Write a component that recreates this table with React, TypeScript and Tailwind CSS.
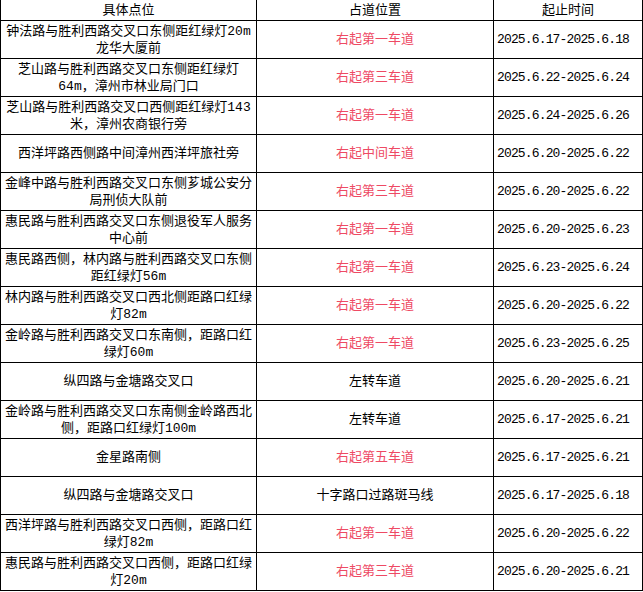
type Row = {
  place: string[];
  lane: string;
  red: boolean;
  time: string;
};

const rows: Row[] = [
  { place: ['钟法路与胜利西路交叉口东侧距红绿灯20m', '龙华大厦前'], lane: '右起第一车道', red: true, time: '2025.6.17-2025.6.18' },
  { place: ['芝山路与胜利西路交叉口东侧距红绿灯', '64m，漳州市林业局门口'], lane: '右起第三车道', red: true, time: '2025.6.22-2025.6.24' },
  { place: ['芝山路与胜利西路交叉口西侧距红绿灯143', '米，漳州农商银行旁'], lane: '右起第一车道', red: true, time: '2025.6.24-2025.6.26' },
  { place: ['西洋坪路西侧路中间漳州西洋坪旅社旁'], lane: '右起中间车道', red: true, time: '2025.6.20-2025.6.22' },
  { place: ['金峰中路与胜利西路交叉口东侧芗城公安分', '局刑侦大队前'], lane: '右起第三车道', red: true, time: '2025.6.20-2025.6.22' },
  { place: ['惠民路与胜利西路交叉口东侧退役军人服务', '中心前'], lane: '右起第一车道', red: true, time: '2025.6.20-2025.6.23' },
  { place: ['惠民路西侧，林内路与胜利西路交叉口东侧', '距红绿灯56m'], lane: '右起第一车道', red: true, time: '2025.6.23-2025.6.24' },
  { place: ['林内路与胜利西路交叉口西北侧距路口红绿', '灯82m'], lane: '右起第一车道', red: true, time: '2025.6.20-2025.6.22' },
  { place: ['金岭路与胜利西路交叉口东南侧，距路口红', '绿灯60m'], lane: '右起第一车道', red: true, time: '2025.6.23-2025.6.25' },
  { place: ['纵四路与金塘路交叉口'], lane: '左转车道', red: false, time: '2025.6.20-2025.6.21' },
  { place: ['金岭路与胜利西路交叉口东南侧金岭路西北', '侧，距路口红绿灯100m'], lane: '左转车道', red: false, time: '2025.6.17-2025.6.21' },
  { place: ['金星路南侧'], lane: '右起第五车道', red: true, time: '2025.6.17-2025.6.21' },
  { place: ['纵四路与金塘路交叉口'], lane: '十字路口过路斑马线', red: false, time: '2025.6.17-2025.6.18' },
  { place: ['西洋坪路与胜利西路交叉口西侧，距路口红', '绿灯82m'], lane: '右起第一车道', red: true, time: '2025.6.20-2025.6.22' },
  { place: ['惠民路与胜利西路交叉口西侧，距路口红绿', '灯20m'], lane: '右起第三车道', red: true, time: '2025.6.20-2025.6.21' },
];

const cell = 'flex items-center border-r border-b border-black';

export default function App() {
  return (
    <div className="w-[643px] bg-white text-[13px] leading-[17px] text-black [font-family:'Liberation_Mono','Noto_Sans_CJK_SC',monospace]">
      <div className="grid grid-cols-[257px_237px_149px]">
        {/* header */}
        <div className={`${cell} h-[21px] justify-center border-l`}>具体点位</div>
        <div className={`${cell} h-[21px] justify-center`}>占道位置</div>
        <div className={`${cell} h-[21px] justify-center`}>起止时间</div>

        {rows.map((r, i) => (
          <div key={i} className="contents">
            <div className={`${cell} h-[38px] flex-col justify-center border-l text-center whitespace-nowrap`}>
              {r.place.map((line, j) => (
                <span key={j}>{line}</span>
              ))}
            </div>
            <div className={`${cell} h-[38px] justify-center ${r.red ? 'text-[#ee4a64]' : 'text-black'}`}>
              {r.lane}
            </div>
            <div className={`${cell} h-[38px] pl-[3px] tracking-[-0.85px]`}>{r.time}</div>
          </div>
        ))}
      </div>
    </div>
  );
}
